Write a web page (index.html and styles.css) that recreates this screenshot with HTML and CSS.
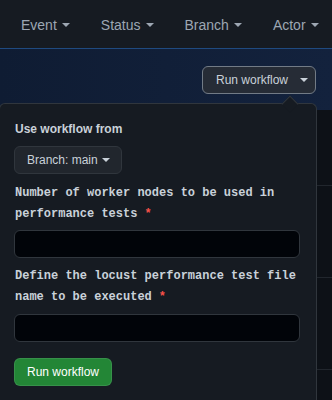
FILE: index.html
```html
<!DOCTYPE html>
<html>
<head>
<meta charset="utf-8">
<link rel="stylesheet" href="styles.css">
</head>
<body>
<div class="page">
  <nav class="filters">
    <span class="filter">Event<i class="caret"></i></span>
    <span class="filter">Status<i class="caret"></i></span>
    <span class="filter">Branch<i class="caret"></i></span>
    <span class="filter">Actor<i class="caret"></i></span>
  </nav>
  <div class="band">
    <button class="run-toggle">Run workflow <i class="caret small"></i></button>
  </div>
  <div class="rows">
    <div class="row r1"></div>
    <div class="row"></div>
    <div class="row"></div>
  </div>

  <div class="popup">
    <div class="popup-arrow"></div>
    <div class="popup-title">Use workflow from</div>
    <button class="branch-btn">Branch: main <i class="caret small"></i></button>
    <label class="field-label">Number of worker nodes to be used in performance tests<span class="req">*</span></label>
    <input class="field-input" type="text">
    <label class="field-label second">Define the locust performance test file name to be executed<span class="req">*</span></label>
    <input class="field-input" type="text">
    <button class="submit">Run workflow</button>
  </div>
</div>
</body>
</html>
```

FILE: styles.css
```css
* { box-sizing: border-box; }
html, body { margin: 0; padding: 0; background: #0d1117; }
body { font-family: "Liberation Sans", Arial, sans-serif; width: 332px; height: 400px; overflow: hidden; }
.page { position: relative; width: 332px; height: 400px; overflow: hidden; }

.filters {
  height: 49px;
  background: #161b22;
  display: flex;
  align-items: center;
  padding: 0 0 0 21px;
  gap: 31px;
  border-bottom: 1px solid #1f4a80;
}
.filter {
  color: #9da7b3;
  font-size: 14px;
  display: inline-flex;
  align-items: center;
  gap: 5px;
  white-space: nowrap;
  padding-top: 2px;
}
.caret {
  display: inline-block;
  width: 0; height: 0;
  border-left: 4px solid transparent;
  border-right: 4px solid transparent;
  border-top: 4px solid #9da7b3;
}
.caret.small { border-top-color: #c9d1d9; margin-left: 8px; }

.band {
  height: 61px;
  background: linear-gradient(90deg, #0f1c33 0%, #13223d 100%);
  display: flex;
  justify-content: flex-end;
  align-items: flex-start;
  padding: 17px 16px 0 0;
}
.run-toggle {
  height: 28px;
  width: 114px;
  padding: 0 0 0 13px;
  display: flex;
  align-items: center;
  background: #262c36;
  border: 1px solid #727b86;
  border-radius: 6px;
  color: #c9d1d9;
  font-family: "Liberation Sans", Arial, sans-serif;
  font-size: 12px;
}
.run-toggle .caret { margin-left: 12px; }

.rows { display: flex; flex-direction: column; }
.row { height: 92px; border-bottom: 1px solid #21262d; }
.row.r1 { height: 76px; }

.popup {
  position: absolute;
  left: -1px;
  top: 103px;
  width: 318px;
  height: 297px;
  background: #161b22;
  border: 1px solid #30363d;
  border-bottom: none;
  border-radius: 6px 6px 0 0;
  padding: 16px 16px 0 14px;
  display: flex;
  flex-direction: column;
  align-items: flex-start;
}
.popup-arrow {
  position: absolute;
  top: -7px;
  left: 284px;
  width: 12px;
  height: 12px;
  background: #161b22;
  border-left: 1px solid #30363d;
  border-top: 1px solid #30363d;
  transform: translateY(1px) rotate(45deg);
  transform-origin: center;
}
.popup-title {
  color: #c9d1d9;
  font-weight: bold;
  font-size: 12px;
  line-height: 18px;
  padding-left: 1px;
}
.branch-btn {
  margin-top: 8px;
  height: 28px;
  width: 108px;
  padding: 0 0 0 12px;
  display: flex;
  align-items: center;
  background: #21262d;
  border: 1px solid #30363d;
  border-radius: 6px;
  color: #c9d1d9;
  font-family: "Liberation Sans", Arial, sans-serif;
  font-size: 12px;
}
.branch-btn .caret { margin-left: 4px; }
.field-label {
  margin-top: 9px;
  padding-left: 1px;
  font-family: "Liberation Mono", "DejaVu Sans Mono", monospace;
  font-weight: bold;
  font-size: 12px;
  line-height: 21px;
  color: #c9d1d9;
  width: 290px;
}
.field-label.second { margin-top: 8px; }
.req { color: #f85149; margin-left: 7px; }
.field-input {
  margin-top: 5px;
  width: 286px;
  height: 28px;
  background: #010409;
  border: 1px solid #30363d;
  border-radius: 6px;
}
.field-label.second + .field-input { margin-top: 6px; }
.submit {
  margin-top: 16px;
  height: 28px;
  width: 98px;
  padding: 0;
  background: #238636;
  border: 1px solid rgba(240,246,252,0.1);
  border-radius: 6px;
  color: #ffffff;
  font-family: "Liberation Sans", Arial, sans-serif;
  font-size: 12px;
}
```
